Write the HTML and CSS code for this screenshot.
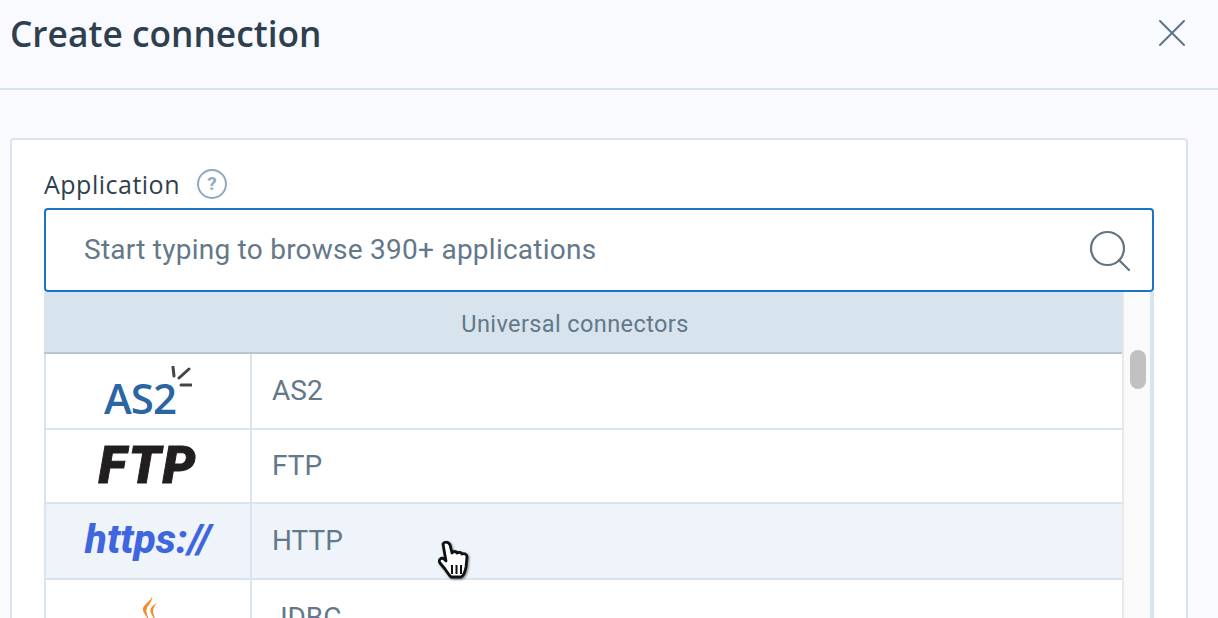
FILE: index.html
```html
<!DOCTYPE html>
<html lang="en">
<head>
<meta charset="utf-8">
<title>Create connection</title>
<link rel="stylesheet" href="styles.css">
</head>
<body>
<header class="header">
  <h1 class="title">Create connection</h1>
  <svg class="close" width="30" height="30" viewBox="0 0 30 30"><path d="M3 3 L27 27 M27 3 L3 27" fill="none" stroke="#5f7485" stroke-width="2" stroke-linecap="round"/></svg>
</header>
<main class="main">
  <section class="card">
    <div class="label-row">
      <span class="label">Application</span>
      <span class="help">?</span>
    </div>
    <div class="search">
      <span class="placeholder">Start typing to browse 390+ applications</span>
      <svg class="search-icon" width="42" height="44" viewBox="0 0 42 44"><circle cx="19.500" cy="20.500" r="16.500" fill="none" stroke="#5f7485" stroke-width="2.200"/><path d="M31 32 L41 42" stroke="#5f7485" stroke-width="2.200" stroke-linecap="round"/></svg>
    </div>
    <div class="dropdown">
      <div class="list">
        <div class="group">Universal connectors</div>
        <div class="row row-as2">
          <div class="logo">
            <span class="as2">AS2</span>
            <svg class="spark" width="22" height="24" viewBox="0 0 22 24"><path d="M3 1 L4 10 M19 3 L9 12 M11 19 L21 19" fill="none" stroke="#444" stroke-width="3" stroke-linecap="round"/></svg>
          </div>
          <div class="name">AS2</div>
        </div>
        <div class="row row-ftp">
          <div class="logo"><span class="ftp">FTP</span></div>
          <div class="name">FTP</div>
        </div>
        <div class="row row-http">
          <div class="logo"><span class="https">https://</span></div>
          <div class="name">HTTP</div>
        </div>
        <div class="row row-jdbc">
          <div class="logo">
            <svg class="java" width="20" height="26" viewBox="0 0 20 26"><path d="M12 0 C13 5 5 8 3 13 C2 17 6 20 9 26 C8 20 5 17 7 13 C9 9 13 6 12 0 Z M17 8 C13 10 9 14 11 18 C12 21 14 23 15 26 C15 22 13 19 13 16 C13 13 15 10 17 8 Z" fill="#f08a2c"/></svg>
          </div>
          <div class="name">JDBC</div>
        </div>
      </div>
      <div class="track"><div class="thumb"></div></div>
    </div>
  </section>
</main>
<svg class="cursor" width="34" height="40" viewBox="0 0 34 40">
  <path d="M5 3 C7 0 11 1 12 4 L14 12 C15 10 18 10 19 12 C21 11 23 11 24 13 C26 12 29 13 29 16 L28 26 C27 31 26 35 23 36 L13 36 C11 34 9 31 7 28 L2 22 C0 19 3 16 6 18 L8 20 Z" fill="#fff" stroke="#111" stroke-width="2.800" stroke-linejoin="round"/>
  <path d="M14 24 V33 M18.500 24 V33 M23 24 V33" stroke="#111" stroke-width="2"/>
</svg>
</body>
</html>
```
FILE: styles.css
```css
* { box-sizing: border-box; }
html, body { margin: 0; height: 618px; overflow: hidden; }
body { background: #f8faff; font-family: "Open Sans", "Liberation Sans", sans-serif; position: relative; }

.header {
  height: 90px;
  border-bottom: 2px solid #d8e4ec;
  padding: 0 31px 22px 10px;
  display: flex;
  align-items: center;
  justify-content: space-between;
}
.title { margin: 0; font-size: 35.3px; font-weight: 600; color: #2f3f4e; line-height: 46px; }
.close { display: block; }

.main { padding: 48px 30px 0 10px; }
.card {
  height: 560px;
  background: #fff;
  border: 2px solid #d8e4ee;
  border-radius: 4px;
  padding: 20px 32px 0;
}
.label-row { display: flex; align-items: center; height: 48px; }
.label { font-size: 25px; color: #2f3f4e; letter-spacing: 0.5px; }
.help {
  width: 30px;
  height: 30px;
  margin-left: 17px;
  border: 2px solid #8fa9bf;
  border-radius: 50%;
  color: #8fa9bf;
  font: 700 19px/26px "Roboto", sans-serif;
  text-align: center;
}
.search {
  height: 84px;
  border: 2px solid #1b74c9;
  border-radius: 4px;
  padding: 0 22px 2px 38px;
  display: flex;
  align-items: center;
  justify-content: space-between;
}
.placeholder { font: 28px "Roboto", sans-serif; color: #63788a; letter-spacing: 0.25px; }
.search-icon { display: block; margin-top: 2px; }

.dropdown {
  display: flex;
  height: 400px;
  border-left: 2px solid #d8e4ee;
  border-right: 4px solid #d8e4ee;
}
.list { flex: 1; }
.group {
  height: 62px;
  margin-left: -2px;
  padding: 4px 16px 0 0;
  background: #d8e4ed;
  border-bottom: 2px solid #b9c6d0;
  color: #63788a;
  font: 23.5px "Roboto", sans-serif;
  letter-spacing: 0.4px;
  display: flex;
  align-items: center;
  justify-content: center;
}
.row { display: flex; border-bottom: 2px solid #d8e4ee; background: #fff; }
.row-as2 { height: 76px; }
.row-ftp { height: 74px; }
.row-http { height: 76px; background: #eef4fa; }
.row-jdbc { height: 76px; border-bottom: 0; }
.logo {
  width: 206px;
  border-right: 2px solid #d8e4ee;
  display: flex;
  align-items: center;
  justify-content: center;
  position: relative;
  overflow: hidden;
}
.name {
  flex: 1;
  padding: 0 0 2px 20px;
  display: flex;
  align-items: center;
  font: 28px "Roboto", sans-serif;
  color: #63788a;
}
.as2 { font: 600 42px/1 "Open Sans", sans-serif; color: #2b66a3; margin: 14px 16px 0 0; letter-spacing: -1px; }
.spark { position: absolute; left: 124px; top: 12px; }
.ftp { font: italic 900 52px/1 "Roboto", sans-serif; color: #211e1f; letter-spacing: 2px; -webkit-text-stroke: 1px #211e1f; }
.https { font: italic 800 40.5px/1 "Roboto", sans-serif; color: #3f66e0; margin-bottom: 4px; }
.java { position: absolute; left: 94px; top: 15px; }

.track {
  width: 28px;
  background: #fafafa;
  border-left: 2px solid #e8e8e8;
  padding: 58px 4px 0 6px;
}
.thumb { width: 16px; height: 39px; border-radius: 8px; background: #c1c1c1; }

.cursor { position: absolute; left: 438px; top: 541px; filter: drop-shadow(1px 1px 1px rgba(0, 0, 0, 0.5)); }
```
